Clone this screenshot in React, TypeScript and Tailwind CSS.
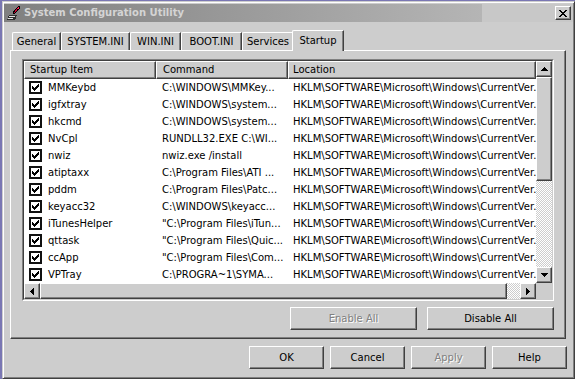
import React from "react";

const raised =
  "border border-t-white border-l-white border-r-[#404040] border-b-[#404040] shadow-[inset_-1px_-1px_0_#808080]";
const dither =
  "bg-[repeating-conic-gradient(#ffffff_0%_25%,#cdcdcd_0%_50%)] bg-[length:2px_2px]";

const rows = [
  ["MMKeybd", "C:\\WINDOWS\\MMKey..."],
  ["igfxtray", "C:\\WINDOWS\\system..."],
  ["hkcmd", "C:\\WINDOWS\\system..."],
  ["NvCpl", "RUNDLL32.EXE C:\\WI..."],
  ["nwiz", "nwiz.exe /install"],
  ["atiptaxx", "C:\\Program Files\\ATI ..."],
  ["pddm", "C:\\Program Files\\Patc..."],
  ["keyacc32", "C:\\WINDOWS\\keyacc..."],
  ["iTunesHelper", "\"C:\\Program Files\\iTun..."],
  ["qttask", "\"C:\\Program Files\\Quic..."],
  ["ccApp", "\"C:\\Program Files\\Com..."],
  ["VPTray", "C:\\PROGRA~1\\SYMA..."],
];

const tabs = [
  { label: "General", w: "w-[49px]" },
  { label: "SYSTEM.INI", w: "w-[69px]" },
  { label: "WIN.INI", w: "w-[51px]" },
  { label: "BOOT.INI", w: "w-[61px]" },
  { label: "Services", w: "w-[52px]" },
];

const Arrow = ({ dir }: { dir: "up" | "down" | "left" | "right" }) => {
  const d = {
    up: "M3 0h1v1h1v1h1v1h1v1H0V3h1V2h1V1h1z",
    down: "M3 4h1V3h1V2h1V1h1V0H0v1h1v1h1v1h1z",
    left: "M0 3h1V2h1V1h1V0h1v7H3V6H2V5H1V4H0z",
    right: "M4 3H3V2H2V1H1V0H0v7h1V6h1V5h1V4h1z",
  }[dir];
  const vertical = dir === "up" || dir === "down";
  return (
    <div className={`w-[16px] h-[16px] shrink-0 flex items-center justify-center bg-[#cdcdcd] ${raised}`}>
      <svg
        width={vertical ? 7 : 4}
        height={vertical ? 4 : 7}
        viewBox={vertical ? "0 0 7 4" : "0 0 4 7"}
        shapeRendering="crispEdges"
      >
        <path d={d} fill="#000" />
      </svg>
    </div>
  );
};

const Btn = ({
  label,
  disabled,
  className,
}: {
  label: string;
  disabled?: boolean;
  className: string;
}) => (
  <div className={`h-[23px] flex items-center justify-center ${raised} ${className}`}>
    <span className={disabled ? "text-[#808080] [text-shadow:1px_1px_0_#ffffff]" : "text-black"}>
      {label}
    </span>
  </div>
);

const Check = () => (
  <div className="w-[13px] h-[13px] shrink-0 bg-white border-2 border-[#111] flex items-center justify-center">
    <svg width="7" height="7" viewBox="0 0 7 7" shapeRendering="crispEdges">
      <path d="M6 0h1v3H6v1H5v1H4v1H3v1H2V6H1V5H0V2h1v1h1v1h1V3h1V2h1V1h1z" fill="#000" />
    </svg>
  </div>
);

export default function App() {
  return (
    <div className="w-[575px] h-[379px] bg-[#7a77b3] pl-[2px] pt-[1px] overflow-hidden font-['DejaVu_Sans',sans-serif] text-[10px] text-black leading-none">
      <div className="h-full flex flex-col bg-[#cdcdcd] border border-t-[#cdcdcd] border-l-[#cdcdcd] border-r-[#404040] border-b-[#404040] px-[1px] pt-[2px] shadow-[inset_1px_1px_0_#ffffff,inset_-1px_-1px_0_#808080]">
        {/* title bar */}
        <div className="h-[18px] flex items-center bg-[linear-gradient(to_right,#808080,#b5b5b5_84%,#c8c8c8_84%)]">
          <svg width="16" height="16" viewBox="0 0 16 16" className="ml-[2px]" shapeRendering="crispEdges">
            <path d="M3 10h8l-2 5H1z" fill="#303030" />
            <path d="M3 11h6v1H3zM2 13h5v1H2z" fill="#e0e0e0" />
            <path d="M12 1h2v2l-5 6H7V7z" fill="#000" />
            <path d="M12 2h1v1l-1 1h-1z" fill="#ff2050" />
            <path d="M10 4h1v1l-2 3H8z" fill="#d00030" />
          </svg>
          <span className="ml-[2px] font-bold text-[#d4d4d4]">System Configuration Utility</span>
          <div className="flex-1" />
          <div className={`w-[16px] h-[14px] mr-[2px] flex items-center justify-center bg-[#cdcdcd] ${raised}`}>
            <svg width="8" height="7" viewBox="0 0 8 7" shapeRendering="crispEdges">
              <path
                d="M0 0h2v1h1v1h2V1h1V0h2v1H7v1H6v1H5v1h1v1h1v1h1v1H6V6H5V5H3v1H2v1H0V6h1V5h1V4h1V3H2V2H1V1H0z"
                fill="#000"
              />
            </svg>
          </div>
        </div>

        {/* tabs */}
        <div className="mt-[8px] ml-[8px] h-[20px] flex items-end">
          {tabs.map((t) => (
            <div
              key={t.label}
              className={`${t.w} h-[18px] flex items-center justify-center border-t border-l border-t-white border-l-white border-r border-r-[#404040] shadow-[inset_-1px_0_0_#808080] rounded-tl-[2px]`}
            >
              {t.label}
            </div>
          ))}
          <div className="w-[52px] h-[21px] -ml-[2px] -mb-[1px] relative z-10 bg-[#cdcdcd] flex items-center justify-center pb-[1px] border-t border-l border-t-white border-l-white border-r border-r-[#404040] shadow-[inset_-1px_0_0_#808080] rounded-tl-[2px]">
            Startup
          </div>
        </div>

        {/* tab panel */}
        <div className={`ml-[6px] w-[556px] h-[289px] flex flex-col px-[11px] pt-[8px] ${raised}`}>
          {/* list box */}
          <div className="h-[242px] border border-t-[#808080] border-l-[#808080] border-r-white border-b-white">
            <div className="h-full flex flex-col border border-t-[#404040] border-l-[#404040] border-r-[#cdcdcd] border-b-[#cdcdcd] bg-white">
              <div className="flex-1 flex min-h-0">
                <div className="flex-1 flex flex-col overflow-hidden">
                  <div className="h-[18px] flex shrink-0 bg-[#cdcdcd]">
                    <div className={`w-[132px] flex items-center pl-[5px] ${raised}`}>Startup Item</div>
                    <div className={`w-[132px] flex items-center pl-[6px] ${raised}`}>Command</div>
                    <div className={`flex-1 flex items-center pl-[4px] ${raised}`}>Location</div>
                  </div>
                  {rows.map(([name, cmd]) => (
                    <div key={name} className="h-[17px] shrink-0 flex items-center whitespace-nowrap">
                      <div className="w-[132px] shrink-0 flex items-center gap-[6px] pl-[5px]">
                        <Check />
                        <span>{name}</span>
                      </div>
                      <div className="w-[132px] shrink-0 pl-[6px] overflow-hidden">{cmd}</div>
                      <div className="flex-1 pl-[5px] overflow-hidden">
                        HKLM\SOFTWARE\Microsoft\Windows\CurrentVer.
                      </div>
                    </div>
                  ))}
                </div>
                <div className="w-[16px] flex flex-col">
                  <Arrow dir="up" />
                  <div className={`h-[104px] bg-[#cdcdcd] ${raised}`} />
                  <div className={`flex-1 ${dither}`} />
                  <Arrow dir="down" />
                </div>
              </div>
              <div className="h-[16px] flex shrink-0">
                <Arrow dir="left" />
                <div className={`w-[467px] bg-[#cdcdcd] ${raised}`} />
                <div className={`flex-1 ${dither}`} />
                <Arrow dir="right" />
                <div className="w-[16px] bg-[#cdcdcd]" />
              </div>
            </div>
          </div>

          <div className="mt-[6px] flex justify-end gap-[10px]">
            <Btn label="Enable All" disabled className="w-[127px]" />
            <Btn label="Disable All" className="w-[127px]" />
          </div>
        </div>

        {/* dialog buttons */}
        <div className="mt-[7px] flex justify-end gap-[6px] pr-[6px]">
          <Btn label="OK" className="w-[75px]" />
          <Btn label="Cancel" className="w-[75px]" />
          <Btn label="Apply" disabled className="w-[75px]" />
          <Btn label="Help" className="w-[75px]" />
        </div>
      </div>
    </div>
  );
}
